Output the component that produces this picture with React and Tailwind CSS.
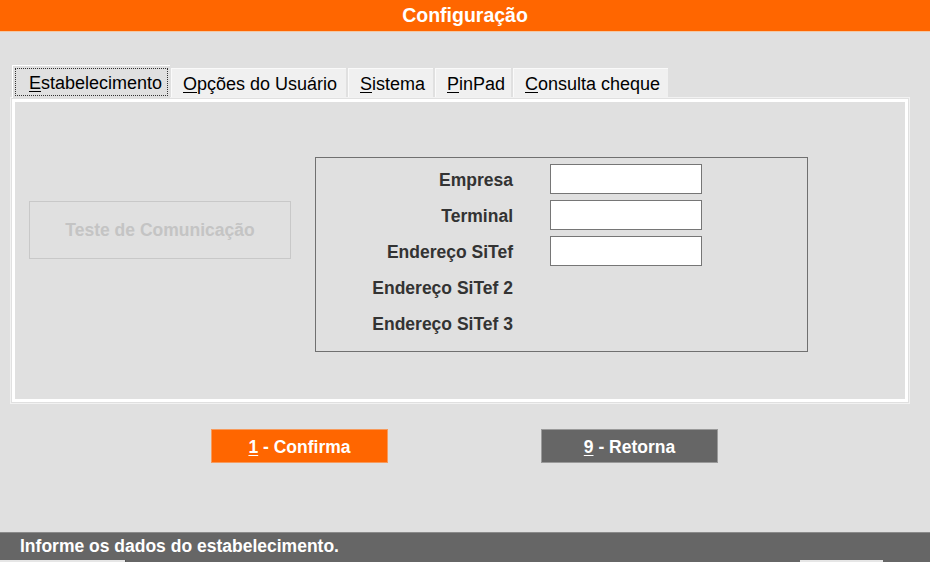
import React from "react";

const FONT = { fontFamily: '"Liberation Sans", Arial, sans-serif' };

const TABS = [
  { key: "usuario", first: "O", rest: "pções do Usuário", width: "w-[175px]" },
  { key: "sistema", first: "S", rest: "istema", width: "w-[85px]" },
  { key: "pinpad", first: "P", rest: "inPad", width: "w-[76px]" },
  { key: "cheque", first: "C", rest: "onsulta cheque", width: "w-[155px]" },
];

const FIELDS = [
  { label: "Empresa", input: true },
  { label: "Terminal", input: true },
  { label: "Endereço SiTef", input: true },
  { label: "Endereço SiTef 2", input: false },
  { label: "Endereço SiTef 3", input: false },
];

const App = () => {
  return (
    <div
      className="w-[930px] h-[562px] flex flex-col bg-[#e0e0e0] overflow-hidden"
      style={FONT}
    >
      {/* HEADER */}
      <div className="h-[32px] shrink-0 bg-[#ff6600] border-b border-[#f3c8a4] flex items-center justify-center">
        <span className="text-white font-bold text-[19.5px] leading-none">
          Configuração
        </span>
      </div>

      {/* CONTENT */}
      <div className="flex-1 pt-[33px] pl-[10px]">
        {/* TABS */}
        <div className="flex items-end h-[32px] pl-[2px] relative z-10">
          <div className="w-[158px] h-[33px] -mb-px bg-[#e0e0e0] border-t border-l border-white p-[2px] shrink-0">
            <div className="h-full border border-dotted border-[#333] flex items-center pl-[13px] pt-[2px] text-[18px] text-black leading-none">
              <span>
                <u className="underline-offset-2">E</u>stabelecimento
              </span>
            </div>
          </div>
          {TABS.map((t) => (
            <div
              key={t.key}
              className={`${t.width} h-[29px] ml-[1px] mr-[1px] bg-[#f0f0f0] border-t border-l border-[#fafafa] flex items-center pl-[11px] pt-[2px] text-[18px] text-black leading-none shrink-0`}
            >
              <span>
                <u className="underline-offset-2">{t.first}</u>
                {t.rest}
              </span>
            </div>
          ))}
        </div>

        {/* PANEL */}
        <div className="w-[900px] h-[307px] border border-[#f2f2f2] p-px">
          <div className="h-full border-[3px] border-white bg-[#e0e0e0] flex items-start pl-[14px] pt-[55px]">
            <button
              disabled
              className="w-[262px] h-[58px] mt-[44px] border border-[#c8c8c8] bg-[#e0e0e0] text-[#c4c4c4] font-bold text-[17.5px] shrink-0"
            >
              Teste de Comunicação
            </button>

            <div className="ml-[24px] w-[493px] h-[195px] border border-[#707070] pt-[6px]">
              <div className="grid grid-cols-[197px_152px] gap-x-[37px] gap-y-[6px]">
                {FIELDS.map((f) => (
                  <React.Fragment key={f.label}>
                    <div className="h-[30px] flex items-center justify-end pt-[3px] text-[17.5px] font-bold text-[#333]">
                      {f.label}
                    </div>
                    {f.input ? (
                      <div className="h-[30px] bg-white border border-[#767676]" />
                    ) : (
                      <div className="h-[30px]" />
                    )}
                  </React.Fragment>
                ))}
              </div>
            </div>
          </div>
        </div>

        {/* BUTTONS */}
        <div className="flex mt-[25px] pl-[201px] gap-[153px]">
          <button className="w-[177px] h-[34px] pt-[3px] bg-[#ff6600] border border-[#f79a5c] text-white font-bold text-[17.5px] leading-none">
            <u className="underline-offset-2">1</u> - Confirma
          </button>
          <button className="w-[177px] h-[34px] pt-[3px] bg-[#666666] border border-[#9a9a9a] text-white font-bold text-[17.5px] leading-none">
            <u className="underline-offset-2">9</u> - Retorna
          </button>
        </div>
      </div>

      {/* STATUS BAR */}
      <div className="h-[28px] shrink-0 bg-[#666666] border-t border-[#8a8a8a] flex items-center pl-[20px] text-white font-bold text-[17.5px]">
        Informe os dados do estabelecimento.
      </div>
      <div className="h-[2px] shrink-0 flex">
        <div className="w-[125px] bg-[#e6e6e6]" />
        <div className="w-[675px] bg-[#666666] border-l border-[#555]" />
        <div className="w-[83px] bg-[#e6e6e6]" />
        <div className="flex-1 bg-[#666666]" />
      </div>
    </div>
  );
};

export default App;
